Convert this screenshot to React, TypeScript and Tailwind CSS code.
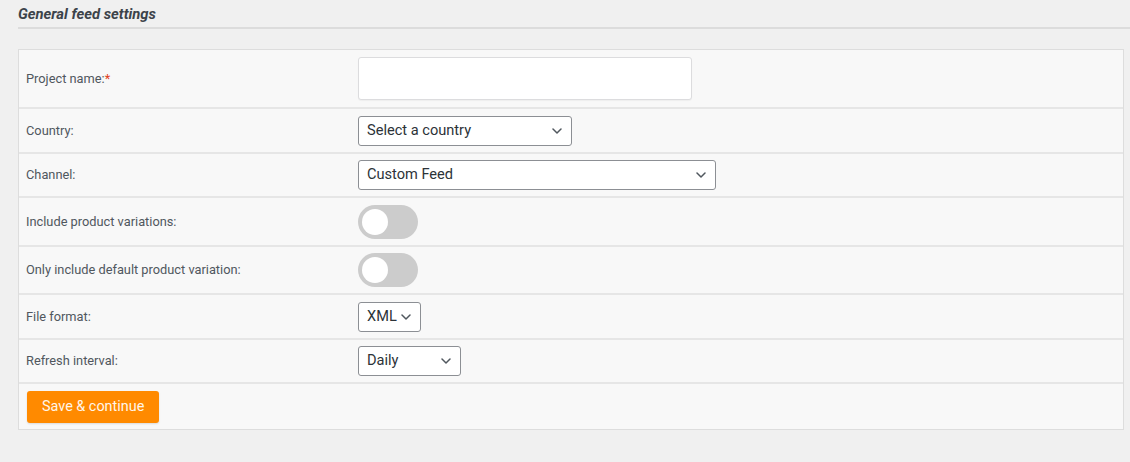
import { useState } from "react";

function Chevron() {
  return (
    <svg width="10" height="6" viewBox="0 0 10 6" className="shrink-0">
      <path d="M1 1l4 4 4-4" fill="none" stroke="#50575e" strokeWidth="1.5" strokeLinecap="round" strokeLinejoin="round" />
    </svg>
  );
}

function FakeSelect({ value, width }: { value: string; width: string }) {
  return (
    <div
      className={`${width} h-[30px] flex items-center justify-between pl-[8px] pr-[9px] bg-white border border-[#8c8f94] rounded-[3px] text-[14.6px] text-[#2c3338]`}
    >
      <span>{value}</span>
      <Chevron />
    </div>
  );
}

function Toggle({ on, onClick }: { on: boolean; onClick: () => void }) {
  return (
    <button
      onClick={onClick}
      className={`relative w-[60px] h-[34px] rounded-full ${on ? "bg-[#ff8a00]" : "bg-[#cccccc]"}`}
    >
      <span
        className={`absolute top-[4px] w-[26px] h-[26px] rounded-full bg-white ${on ? "left-[30px]" : "left-[4px]"}`}
      />
    </button>
  );
}

function Row({ label, height, required, children }: { label: string; height: string; required?: boolean; children: React.ReactNode }) {
  return (
    <div className={`flex items-center ${height} border-b-2 border-[#e6e6e6]`}>
      <div className="w-[339px] pl-[7px] text-[12.8px] text-[#50575e]">
        {label}
        {required && <span className="text-[#e2401c]">*</span>}
      </div>
      <div className="flex items-center">{children}</div>
    </div>
  );
}

export default function App() {
  const [variations, setVariations] = useState(false);
  const [defaultOnly, setDefaultOnly] = useState(false);

  return (
    <div className="min-h-screen bg-[#f0f0f0] pl-[18px] font-['Roboto','Liberation_Sans',sans-serif]">
      <h2 className="pt-[6px] pb-[5px] leading-[16px] text-[14.8px] font-bold italic text-[#3c434a] border-b-2 border-[#dcdcdc]">
        General feed settings
      </h2>

      <div className="mt-[20px] mr-[6px] bg-[#f8f8f8] border border-[#dddddd]">
        <Row label="Project name:" height="h-[59px]" required>
          <input className="w-[334px] h-[43px] bg-white border border-[#dcdcde] rounded-[3px] shadow-[0_1px_1px_rgba(0,0,0,0.04)] outline-none" />
        </Row>
        <Row label="Country:" height="h-[45px]">
          <FakeSelect value="Select a country" width="w-[214px]" />
        </Row>
        <Row label="Channel:" height="h-[44px]">
          <FakeSelect value="Custom Feed" width="w-[358px]" />
        </Row>
        <Row label="Include product variations:" height="h-[49px]">
          <Toggle on={variations} onClick={() => setVariations(!variations)} />
        </Row>
        <Row label="Only include default product variation:" height="h-[48px]">
          <Toggle on={defaultOnly} onClick={() => setDefaultOnly(!defaultOnly)} />
        </Row>
        <Row label="File format:" height="h-[45px]">
          <FakeSelect value="XML" width="w-[63px]" />
        </Row>
        <Row label="Refresh interval:" height="h-[44px]">
          <FakeSelect value="Daily" width="w-[103px]" />
        </Row>
        <div className="h-[45px] flex items-center pl-[8px]">
          <button className="h-[32px] px-[15px] bg-[#ff8a00] text-[14.4px] text-[#fff6ea] rounded-[3px] shadow-[0_1px_2px_rgba(0,0,0,0.12)]">
            Save &amp; continue
          </button>
        </div>
      </div>
    </div>
  );
}
